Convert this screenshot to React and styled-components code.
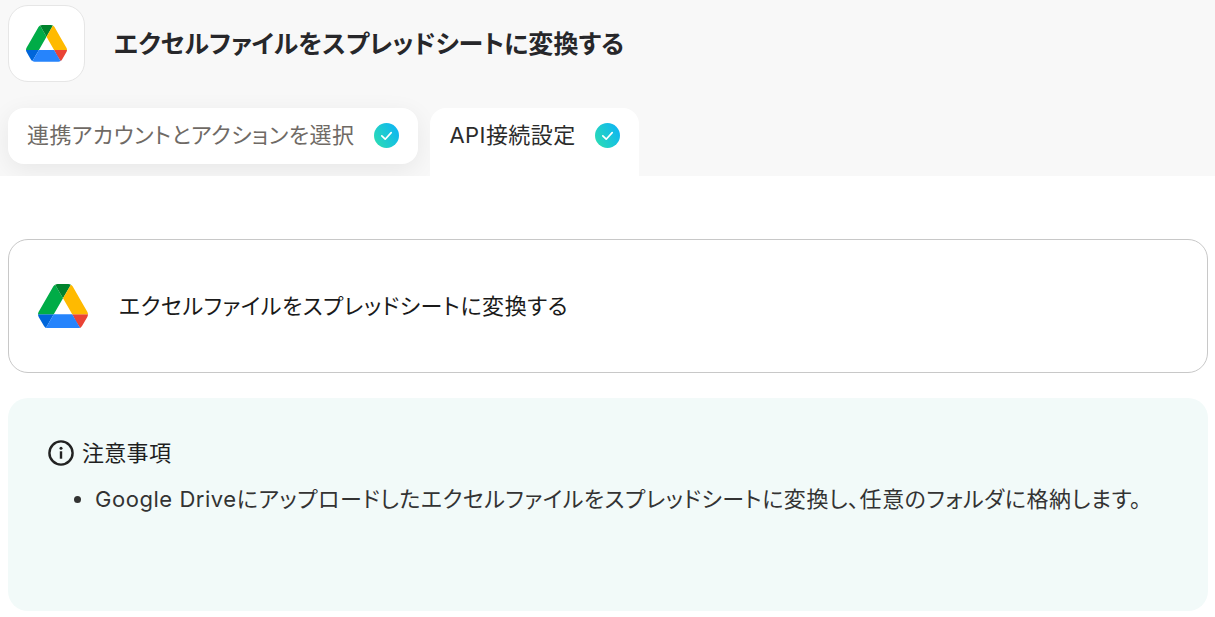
import React from "react";
import styled, { createGlobalStyle } from "styled-components";

const GlobalStyle = createGlobalStyle`
  html, body {
    margin: 0;
    padding: 0;
    background: #fff;
    font-family: Inter, "Noto Sans CJK JP", sans-serif;
    font-feature-settings: "palt";
    color: #27272a;
  }
`;

const Header = styled.header`
  background: #f8f8f8;
  height: 176px;
  padding: 5px 8px 0;
  box-sizing: border-box;
  display: flex;
  flex-direction: column;
  overflow: hidden;
`;

const TitleRow = styled.div`
  display: flex;
  align-items: center;
  gap: 29px;
`;

const IconBox = styled.div`
  width: 77px;
  height: 77px;
  box-sizing: border-box;
  background: #fff;
  border: 1px solid #e6e6e6;
  border-radius: 20px;
  display: flex;
  align-items: center;
  justify-content: center;
`;

const Title = styled.h1`
  margin: -4px 0 0;
  font-size: 25px;
  font-weight: 700;
  letter-spacing: 0.05px;
  color: #27272a;
`;

const Tabs = styled.div`
  display: flex;
  gap: 12px;
  margin-top: 26px;
  align-items: flex-start;
`;

const Tab = styled.div`
  display: flex;
  align-items: center;
  gap: ${(p) => (p.$active ? "19px" : "20px")};
  height: ${(p) => (p.$active ? "68px" : "56px")};
  box-sizing: border-box;
  padding: ${(p) => (p.$active ? "0 19px 13px" : "0 19px 1px")};
  background: #fff;
  border-radius: ${(p) => (p.$active ? "16px 16px 0 0" : "16px")};
  box-shadow: ${(p) => (p.$active ? "none" : "0 6px 24px rgba(0, 0, 0, 0.07)")};
  font-size: 22px;
  letter-spacing: 0.45px;
  font-weight: 400;
  line-height: 52px;
  color: ${(p) => (p.$active ? "#2b2b2b" : "#6f6a65")};
  white-space: nowrap;
`;

const TabLabel = styled.span`
  display: block;
  margin-top: -2px;
`;

const Main = styled.main`
  padding: 63px 7px 0 8px;
  display: flex;
  flex-direction: column;
  gap: 25px;
`;

const AppCard = styled.section`
  height: 134px;
  box-sizing: border-box;
  border: 1px solid #c8c8c8;
  border-radius: 20px;
  padding: 0 29px;
  display: flex;
  align-items: center;
  gap: 31px;
  font-size: 22px;
  letter-spacing: 0.55px;
  color: #1a1a1a;
`;

const AppName = styled.span`
  margin-top: -5px;
`;

const Notice = styled.section`
  height: 213px;
  box-sizing: border-box;
  background: #f2faf9;
  border-radius: 20px;
  padding: 40px 40px 0;
`;

const NoticeHead = styled.div`
  display: flex;
  align-items: center;
  gap: 8px;
  font-size: 22px;
  font-weight: 400;
  letter-spacing: 0.3px;
  line-height: 30px;
  color: #1f1f1f;
`;

const NoticeList = styled.ul`
  margin: 16px 0 0;
  padding-left: 47px;
  font-size: 22px;
  line-height: 30px;
  letter-spacing: 0.54px;
  color: #333;
`;

const DriveIcon = ({ width }) => (
  <svg width={width} viewBox="0 0 87.3 78" style={{ flexShrink: 0 }}>
    <path d="m6.6 66.85 3.85 6.65c.8 1.4 1.95 2.5 3.3 3.3l13.75-23.8h-27.5c0 1.55.4 3.1 1.2 4.5z" fill="#0066da" />
    <path d="m43.65 25-13.75-23.8c-1.35.8-2.5 1.9-3.3 3.3l-25.4 44a9.06 9.06 0 0 0 -1.2 4.5h27.5z" fill="#00ac47" />
    <path d="m73.55 76.8c1.35-.8 2.5-1.9 3.3-3.3l1.6-2.75 7.65-13.25c.8-1.4 1.2-2.95 1.2-4.5h-27.502l5.852 11.5z" fill="#ea4335" />
    <path d="m43.65 25 13.75-23.8c-1.35-.8-2.9-1.2-4.5-1.2h-18.5c-1.6 0-3.15.45-4.5 1.2z" fill="#00832d" />
    <path d="m59.8 53h-32.3l-13.75 23.8c1.35.8 2.9 1.2 4.5 1.2h50.8c1.6 0 3.15-.45 4.5-1.2z" fill="#2684fc" />
    <path d="m73.4 26.5-12.7-22c-.8-1.4-1.95-2.5-3.3-3.3l-13.75 23.8 16.15 28h27.45c0-1.55-.4-3.1-1.2-4.5z" fill="#ffba00" />
  </svg>
);

const CheckBadge = ({ id }) => (
  <svg width="25" height="25" viewBox="0 0 25 25" style={{ flexShrink: 0 }}>
    <defs>
      <linearGradient id={id} x1="0" y1="0.8" x2="1" y2="0.2">
        <stop offset="0" stopColor="#2bdcb4" />
        <stop offset="1" stopColor="#0db4f5" />
      </linearGradient>
    </defs>
    <circle cx="12.5" cy="12.5" r="12.5" fill={`url(#${id})`} />
    <path d="M7.8 12.8l3.4 3.4 6-6.6" fill="none" stroke="#fff" strokeWidth="1.7" strokeLinecap="round" strokeLinejoin="round" />
  </svg>
);

const InfoIcon = () => (
  <svg width="26" height="26" viewBox="0 0 26 26" style={{ flexShrink: 0 }}>
    <circle cx="13" cy="13" r="11.6" fill="none" stroke="#222" strokeWidth="2.4" />
    <circle cx="13" cy="8.3" r="1.5" fill="#222" />
    <rect x="11.8" y="11.3" width="2.4" height="7.4" fill="#222" />
  </svg>
);

const App = () => (
  <>
    <GlobalStyle />
    <Header>
      <TitleRow>
        <IconBox>
          <DriveIcon width={41} />
        </IconBox>
        <Title>エクセルファイルをスプレッドシートに変換する</Title>
      </TitleRow>
      <Tabs>
        <Tab>
          <TabLabel>連携アカウントとアクションを選択</TabLabel>
          <CheckBadge id="badge-a" />
        </Tab>
        <Tab $active>
          <TabLabel>API接続設定</TabLabel>
          <CheckBadge id="badge-b" />
        </Tab>
      </Tabs>
    </Header>
    <Main>
      <AppCard>
        <DriveIcon width={50} />
        <AppName>エクセルファイルをスプレッドシートに変換する</AppName>
      </AppCard>
      <Notice>
        <NoticeHead>
          <InfoIcon />
          注意事項
        </NoticeHead>
        <NoticeList>
          <li>Google Driveにアップロードしたエクセルファイルをスプレッドシートに変換し、任意のフォルダに格納します。</li>
        </NoticeList>
      </Notice>
    </Main>
  </>
);

export default App;
